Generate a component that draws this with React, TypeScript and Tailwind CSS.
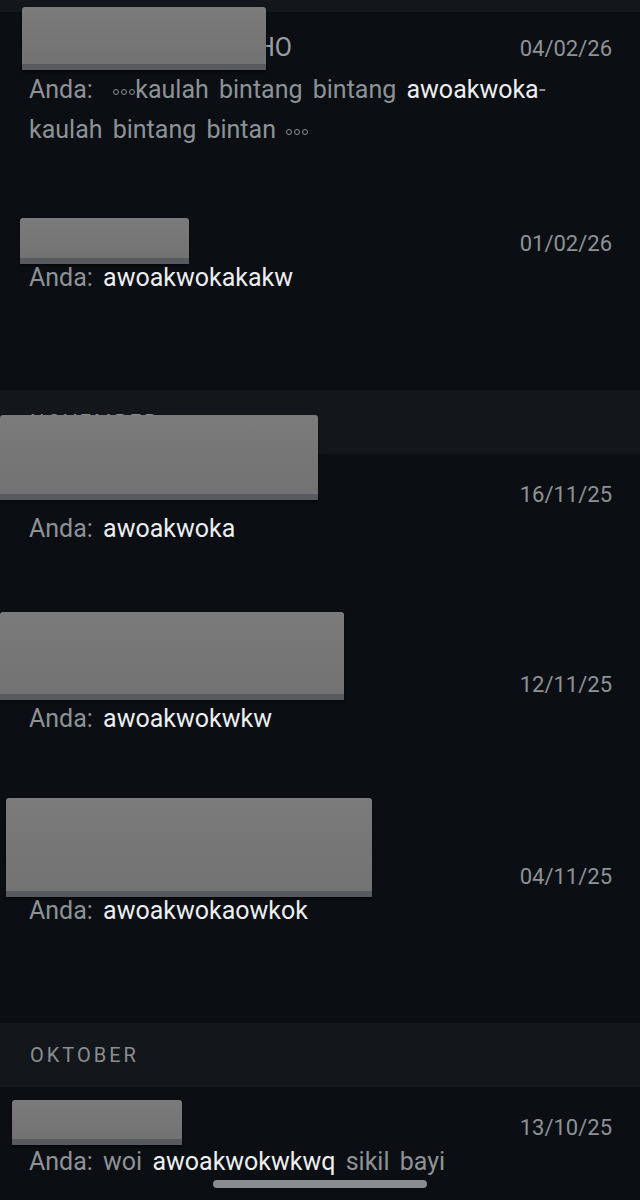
import React from "react";

type Chat = {
  date: string;
  height: string;
  message: React.ReactNode;
};

const Dots: React.FC = () => (
  <span className="inline-flex items-center gap-[2px] align-[3px]">
    <span className="w-[6px] h-[6px] rounded-full border border-[#8e9297]" />
    <span className="w-[6px] h-[6px] rounded-full border border-[#8e9297]" />
    <span className="w-[6px] h-[6px] rounded-full border border-[#8e9297]" />
  </span>
);

const Hi: React.FC<{ children: React.ReactNode }> = ({ children }) => (
  <span className="text-[#eceef0]">{children}</span>
);

// grey blocks that hide the contact names
const Redact: React.FC<{ className: string }> = ({ className }) => (
  <div
    className={`absolute rounded-t-[3px] bg-gradient-to-b from-[#7b7b7c] to-[#727273] border-b-[6px] border-[#585a60] shadow-[0_2px_3px_rgba(0,0,0,0.5)] ${className}`}
  />
);

const SectionHeader: React.FC<{ label: string }> = ({ label }) => (
  <div className="h-[64px] bg-[#13171b] flex items-center px-[30px]">
    <span className="text-[20px] tracking-[3px] text-[#8a8e93]">{label}</span>
  </div>
);

const ChatRow: React.FC<Chat> = ({ date, height, message }) => (
  <div className={`${height} pl-[29px] pr-[28px] pt-[22px]`}>
    <div className="h-[36px] flex items-center justify-end">
      <span className="text-[22px] text-[#8e9297]">{date}</span>
    </div>
    <div className="text-[25px] leading-[34px] text-[#8e9297] [word-spacing:4px]">{message}</div>
  </div>
);

export default function App() {
  return (
    <div
      className="relative w-[640px] h-[1200px] overflow-hidden bg-[#0b0f13]"
      style={{ fontFamily: "Roboto, 'Noto Sans', sans-serif" }}
    >
      <div className="h-[12px] bg-[#13171b]" />

      {/* first chat, two line preview */}
      <div className="h-[191px] pl-[29px] pr-[28px] pt-[18px]">
        <div className="h-[36px] flex items-center justify-between">
          <span className="text-[25px] text-[#9a9ea3] pl-[228px]">HO</span>
          <span className="text-[22px] text-[#8e9297]">04/02/26</span>
        </div>
        <div className="mt-[4px] text-[25px] leading-[40px] text-[#8e9297] [word-spacing:4px]">
          Anda:&nbsp; <Dots />kaulah bintang bintang <Hi>awoakwoka</Hi>-
          <br />
          kaulah bintang bintan <Dots />
        </div>
      </div>

      <ChatRow
        height="h-[187px]"
        date="01/02/26"
        message={
          <>
            Anda: <Hi>awoakwokakakw</Hi>
          </>
        }
      />

      <SectionHeader label="NOVEMBER" />

      <ChatRow
        height="h-[190px]"
        date="16/11/25"
        message={
          <>
            Anda: <Hi>awoakwoka</Hi>
          </>
        }
      />
      <ChatRow
        height="h-[192px]"
        date="12/11/25"
        message={
          <>
            Anda: <Hi>awoakwokwkw</Hi>
          </>
        }
      />
      <ChatRow
        height="h-[187px]"
        date="04/11/25"
        message={
          <>
            Anda: <Hi>awoakwokaowkok</Hi>
          </>
        }
      />

      <SectionHeader label="OKTOBER" />

      <ChatRow
        height="h-[190px]"
        date="13/10/25"
        message={
          <>
            Anda: woi <Hi>awoakwokwkwq</Hi> sikil bayi
          </>
        }
      />

      <Redact className="left-[22px] top-[7px] w-[244px] h-[63px]" />
      <Redact className="left-[20px] top-[218px] w-[169px] h-[46px]" />
      <Redact className="left-0 top-[415px] w-[318px] h-[85px]" />
      <Redact className="left-0 top-[612px] w-[344px] h-[88px]" />
      <Redact className="left-[6px] top-[798px] w-[366px] h-[99px]" />
      <Redact className="left-[12px] top-[1100px] w-[170px] h-[45px]" />

      {/* home indicator */}
      <div className="absolute left-[213px] top-[1180px] w-[214px] h-[8px] rounded-full bg-[#8a8e92]" />
    </div>
  );
}
